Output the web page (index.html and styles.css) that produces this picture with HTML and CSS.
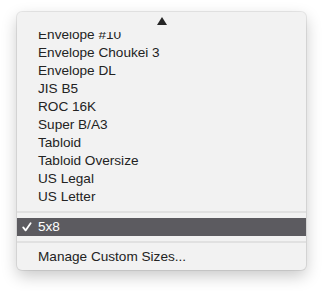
FILE: index.html
```html
<html>
<head>
    <title>Paper Size</title>
    <link rel="stylesheet" href="styles.css">
</head>
<body>
    <div class="menu">
        <div class="scrollUp">
            <span class="arrow"></span>
        </div>
        <div class="viewport">
            <ul class="items">
                <li>Envelope #10</li>
                <li>Envelope Choukei 3</li>
                <li>Envelope DL</li>
                <li>JIS B5</li>
                <li>ROC 16K</li>
                <li>Super B/A3</li>
                <li>Tabloid</li>
                <li>Tabloid Oversize</li>
                <li>US Legal</li>
                <li>US Letter</li>
            </ul>
        </div>
        <div class="separator"></div>
        <div class="item selected">
            <svg class="check" width="10" height="10" viewBox="0 0 10 10">
                <path d="M1.2 5.4 L3.6 8.4 L8.6 1.2" fill="none" stroke="#fff" stroke-width="1.8" stroke-linecap="round" stroke-linejoin="round"/>
            </svg>
            5x8
        </div>
        <div class="separator"></div>
        <div class="item">Manage Custom Sizes...</div>
    </div>
</body>
</html>
```

FILE: styles.css
```css
body {
    margin: 0;
    background-color: white;
    font-family: "Liberation Sans", Arial, sans-serif;
    font-size: 13.6px;
    color: #232323;
}
.menu {
    width: 289px;
    margin: 12px 0 0 17px;
    padding-bottom: 4px;
    background-color: #f2f2f2;
    border-radius: 5px;
    box-shadow: 0 0 0 1px rgba(0,0,0,0.08), 0 6px 16px rgba(0,0,0,0.22);
    display: flex;
    flex-direction: column;
}
.scrollUp {
    height: 20px;
    display: flex;
    justify-content: center;
    align-items: flex-start;
}
.arrow {
    width: 0;
    height: 0;
    margin-top: 5px;
    border-left: 5px solid transparent;
    border-right: 5px solid transparent;
    border-bottom: 8px solid #262626;
}
.viewport {
    height: 174px;
    overflow: hidden;
}
.items {
    list-style: none;
    margin: -6px 0 0 0;
    padding: 0;
}
.items li, .item {
    height: 18px;
    line-height: 18px;
    padding-left: 21px;
    white-space: nowrap;
}
.separator {
    height: 12px;
    display: flex;
    align-items: center;
}
.separator::after {
    content: "";
    flex: 1;
    height: 2px;
    background-color: #e1e1e1;
}
.item.selected {
    position: relative;
    background-color: #5c5b60;
    color: white;
}
.check {
    position: absolute;
    left: 5px;
    top: 4px;
}
```
